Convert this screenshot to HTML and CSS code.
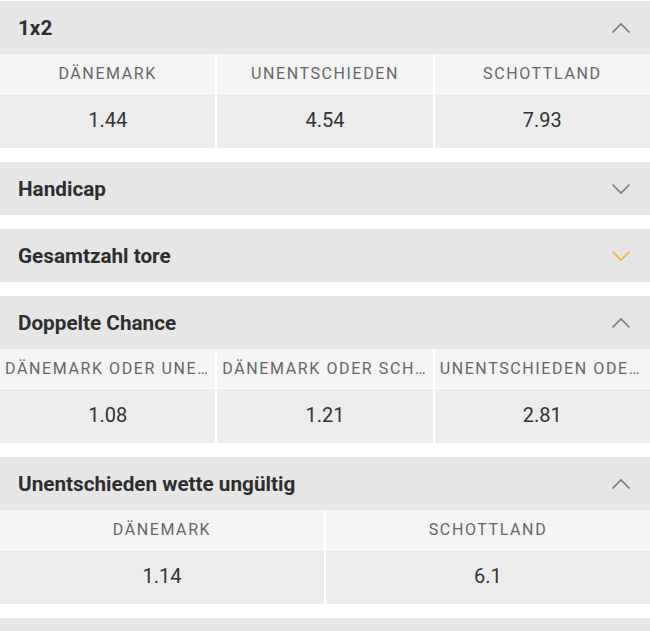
FILE: index.html
```
<!DOCTYPE html>
<html lang="de">
<head>
<meta charset="utf-8">
<title>Wetten</title>
<link rel="stylesheet" href="styles.css">
</head>
<body>
<div class="markets">
  <section class="market">
    <div class="market-head"><span class="title">1x2</span>
      <svg class="chev" width="20" height="12" viewBox="0 0 20 12"><polyline points="1.5,10.5 10,2 18.5,10.5"/></svg>
    </div>
    <div class="grid cols-3">
      <div class="lbl">DÄNEMARK</div><div class="lbl">UNENTSCHIEDEN</div><div class="lbl">SCHOTTLAND</div>
      <div class="odd">1.44</div><div class="odd">4.54</div><div class="odd">7.93</div>
    </div>
  </section>
  <section class="market">
    <div class="market-head"><span class="title">Handicap</span>
      <svg class="chev" width="20" height="12" viewBox="0 0 20 12"><polyline points="1.5,1.5 10,10 18.5,1.5"/></svg>
    </div>
  </section>
  <section class="market">
    <div class="market-head"><span class="title">Gesamtzahl tore</span>
      <svg class="chev accent" width="20" height="12" viewBox="0 0 20 12"><polyline points="1.5,1.5 10,10 18.5,1.5"/></svg>
    </div>
  </section>
  <section class="market">
    <div class="market-head"><span class="title">Doppelte Chance</span>
      <svg class="chev" width="20" height="12" viewBox="0 0 20 12"><polyline points="1.5,10.5 10,2 18.5,10.5"/></svg>
    </div>
    <div class="grid cols-3">
      <div class="lbl">DÄNEMARK ODER UNENTSCHIEDEN</div><div class="lbl">DÄNEMARK ODER SCHOTTLAND</div><div class="lbl">UNENTSCHIEDEN ODER SCHOTTLAND</div>
      <div class="odd">1.08</div><div class="odd">1.21</div><div class="odd">2.81</div>
    </div>
  </section>
  <section class="market">
    <div class="market-head"><span class="title">Unentschieden wette ungültig</span>
      <svg class="chev" width="20" height="12" viewBox="0 0 20 12"><polyline points="1.5,10.5 10,2 18.5,10.5"/></svg>
    </div>
    <div class="grid cols-2">
      <div class="lbl">DÄNEMARK</div><div class="lbl">SCHOTTLAND</div>
      <div class="odd">1.14</div><div class="odd">6.1</div>
    </div>
  </section>
  <section class="market">
    <div class="market-head"></div>
  </section>
</div>
</body>
</html>
```
FILE: styles.css
```
html, body {
  margin: 0;
  padding: 0;
  background: #ffffff;
}
body {
  font-family: Roboto, "Noto Sans", "Liberation Sans", sans-serif;
  width: 650px;
  overflow: hidden;
}
.markets {
  padding-top: 1px;
  display: flex;
  flex-direction: column;
  gap: 14px;
}
.market-head {
  height: 53px;
  background: #e6e6e6;
  display: flex;
  align-items: center;
  justify-content: space-between;
  padding: 0 19px 0 18px;
  box-sizing: border-box;
}
.title {
  font-size: 20.7px;
  font-weight: 700;
  color: #2e2e2e;
}
.chev {
  display: block;
  fill: none;
  stroke: #7a7a7a;
  stroke-width: 1.6;
}
.chev.accent {
  stroke: #f0b33a;
}
.grid {
  display: grid;
  background: #ffffff;
  column-gap: 2px;
  row-gap: 1px;
}
.cols-3 { grid-template-columns: 1fr 1fr 1fr; }
.cols-2 { grid-template-columns: 1fr 1fr; }
.lbl {
  height: 39px;
  background: #f4f4f4;
  color: #666666;
  font-size: 16px;
  letter-spacing: 1.6px;
  text-align: center;
  line-height: 39px;
  padding: 0 5px;
  white-space: nowrap;
  overflow: hidden;
  text-overflow: ellipsis;
}
.odd {
  height: 54px;
  background: #ececec;
  color: #333333;
  font-size: 20px;
  text-align: center;
  line-height: 52px;
}
```
